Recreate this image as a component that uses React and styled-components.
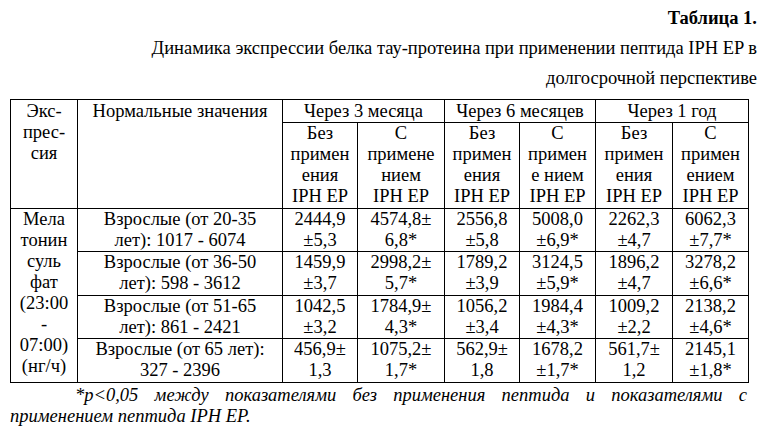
import React from "react";
import styled, { createGlobalStyle } from "styled-components";

const serif = `"Liberation Serif", "Times New Roman", serif`;

const GlobalStyle = createGlobalStyle`
  html, body {
    margin: 0;
    padding: 0;
    background: #fff;
  }
`;

const Page = styled.div`
  width: 770px;
  height: 427px;
  overflow: hidden;
  background: #fff;
  color: #000;
  font-family: ${serif};
  font-size: 18.5px;
`;

const Caption = styled.div`
  text-align: right;
  padding: 3px 13px 0 0;
  line-height: 30px;
`;

const CaptionNum = styled.div`
  font-weight: bold;
`;

const Table = styled.table`
  margin: 6px 0 0 10px;
  width: 738px;
  border-collapse: collapse;
  table-layout: fixed;
  font-family: ${serif};
  font-size: 18.5px;
  line-height: 21px;
  color: #000;
`;

const Cell = styled.td`
  border: 1px solid #000;
  padding: ${(p) => (p.$tall ? "0 0 0.5px" : "1px 0 0")};
  text-align: center;
  vertical-align: top;
  white-space: nowrap;
  overflow: visible;
`;

const Note = styled.p`
  margin: 2px 23px 0 10px;
  line-height: 21px;
  font-style: italic;
  text-align: justify;
  text-indent: 65px;
`;

const widths = [67, 205, 75, 87, 75, 76, 77, 76];

const subHeads = [
  ["Без", "примен", "ения", "IPH EP"],
  ["С", "примене", "нием", "IPH EP"],
  ["Без", "примен", "ения", "IPH EP"],
  ["С", "примен", "е нием", "IPH EP"],
  ["Без", "примен", "ения", "IPH EP"],
  ["С", "примен", "ением", "IPH EP"],
];

const rows = [
  {
    norm: ["Взрослые (от 20-35", "лет): 1017 - 6074"],
    vals: [
      ["2444,9", "±5,3"],
      ["4574,8±", "6,8*"],
      ["2556,8", "±5,8"],
      ["5008,0", "±6,9*"],
      ["2262,3", "±4,7"],
      ["6062,3", "±7,7*"],
    ],
  },
  {
    norm: ["Взрослые (от 36-50", "лет): 598 - 3612"],
    vals: [
      ["1459,9", "±3,7"],
      ["2998,2±", "5,7*"],
      ["1789,2", "±3,9"],
      ["3124,5", "±5,9*"],
      ["1896,2", "±4,7"],
      ["3278,2", "±6,6*"],
    ],
  },
  {
    norm: ["Взрослые (от 51-65", "лет): 861 - 2421"],
    vals: [
      ["1042,5", "±3,2"],
      ["1784,9±", "4,3*"],
      ["1056,2", "±3,4"],
      ["1984,4", "±4,3*"],
      ["1009,2", "±2,2"],
      ["2138,2", "±4,6*"],
    ],
  },
  {
    norm: ["Взрослые (от 65 лет):", "327 - 2396"],
    vals: [
      ["456,9±", "1,3"],
      ["1075,2±", "1,7*"],
      ["562,9±", "1,8"],
      ["1678,2", "±1,7*"],
      ["561,7±", "1,2"],
      ["2145,1", "±1,8*"],
    ],
  },
];

const expression = ["Мела", "тонин", "суль", "фат", "(23:00", "-", "07:00)", "(нг/ч)"];

const Lines = ({ items }) =>
  items.map((t, i) => (
    <React.Fragment key={i}>
      {i > 0 && <br />}
      {t}
    </React.Fragment>
  ));

const App = () => (
  <Page>
    <GlobalStyle />
    <Caption>
      <CaptionNum>Таблица 1.</CaptionNum>
      <div>Динамика экспрессии белка тау-протеина при применении пептида IPH EP в</div>
      <div>долгосрочной перспективе</div>
    </Caption>
    <Table>
      <colgroup>
        {widths.map((w, i) => (
          <col key={i} style={{ width: w }} />
        ))}
      </colgroup>
      <tbody>
        <tr>
          <Cell rowSpan={2}>
            <Lines items={["Экс-", "прес-", "сия"]} />
          </Cell>
          <Cell rowSpan={2}>Нормальные значения</Cell>
          <Cell colSpan={2}>Через 3 месяца</Cell>
          <Cell colSpan={2}>Через 6 месяцев</Cell>
          <Cell colSpan={2}>Через 1 год</Cell>
        </tr>
        <tr>
          {subHeads.map((h, i) => (
            <Cell key={i} $tall>
              <Lines items={h} />
            </Cell>
          ))}
        </tr>
        {rows.map((r, ri) => (
          <tr key={ri}>
            {ri === 0 && (
              <Cell rowSpan={4} $tall>
                <Lines items={expression} />
              </Cell>
            )}
            <Cell $tall>
              <Lines items={r.norm} />
            </Cell>
            {r.vals.map((v, vi) => (
              <Cell key={vi} $tall>
                <Lines items={v} />
              </Cell>
            ))}
          </tr>
        ))}
      </tbody>
    </Table>
    <Note>
      *p&lt;0,05 между показателями без применения пептида и показателями с
      применением пептида IPH EP.
    </Note>
  </Page>
);

export default App;
